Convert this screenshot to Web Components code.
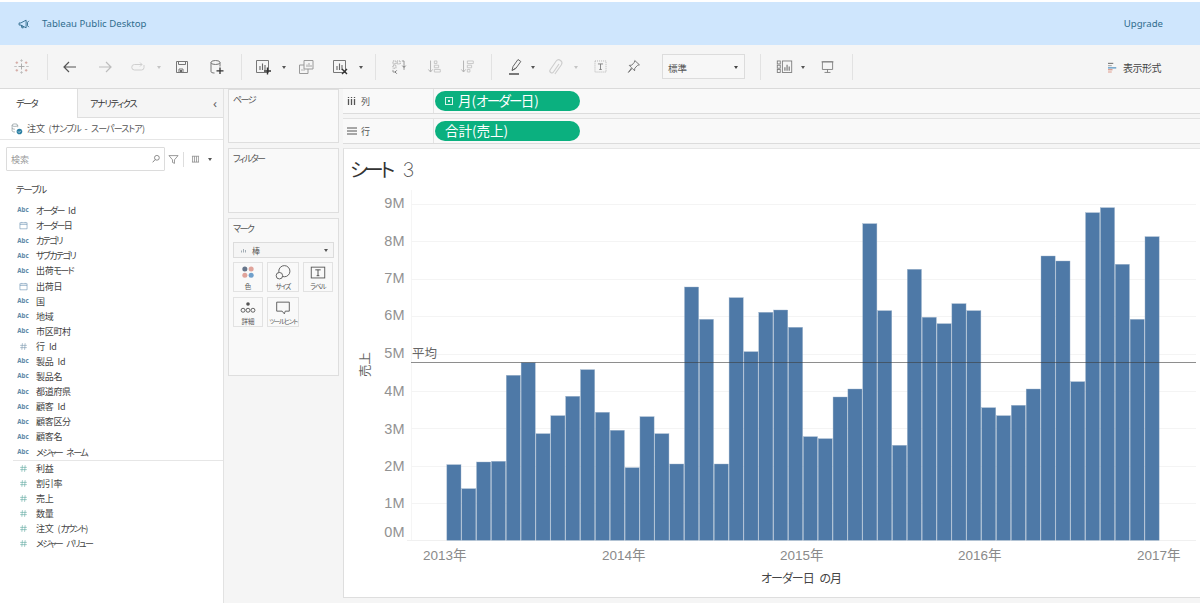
<!DOCTYPE html>
<html lang="ja">
<head>
<meta charset="utf-8">
<title>Tableau Public Desktop</title>
<style>
html,body{margin:0;height:100%;background:#f5f5f5;overflow:hidden}
body{font-family:"Noto Sans CJK JP","Noto Sans",sans-serif;font-feature-settings:"palt";color:#444}
</style>
</head>
<body>
<tb-app>
  <tb-banner slot="banner"></tb-banner>
  <tb-toolbar slot="toolbar"></tb-toolbar>
  <tb-datapane slot="data"></tb-datapane>
  <tb-cards slot="cards"></tb-cards>
  <tb-view slot="view"></tb-view>
</tb-app>
<script>
const K=(t,ls=-1.6)=>t.replace(/[\u30A0-\u30FF]+/g,m=>`<span style="letter-spacing:${ls}px">${m}</span>`);
const ICONS={
logo:`<g fill="none" stroke-width="1.100"><path d="M10 6.500v7M6.500 10h7" stroke="#a8a8a8"/><path d="M4.500 4v3M3 5.500h3M15.500 4v3M14 5.500h3M4.500 13v3M3 14.500h3M15.500 13v3M14 14.500h3" stroke="#d2a6a0"/><path d="M10 1.500v3M8.500 3h3M10 15.500v3M8.500 17h3M1.500 10h3M15.500 10h3" stroke="#bdbdbd"/></g>`,
back:`<path d="M16 10H4M9 5l-5 5 5 5" fill="none" stroke="#555" stroke-width="1.200"/>`,
fwd:`<path d="M4 10h12M11 5l5 5-5 5" fill="none" stroke="#bdbdbd" stroke-width="1.200"/>`,
redo:`<path d="M14 7.500H6.500a2.500 2.500 0 0 0 0 5.500h7a2.500 2.500 0 0 0 2.500-2.500V8M12 5.500l2 2-2 2" fill="none" stroke="#cfcfcf" stroke-width="1"/>`,
save:`<path d="M4.500 4.500h11v11h-11zM6.500 4.500v3h7v-3M7 15.500v-3.500h4v3.500" fill="none" stroke="#777"/><rect x="8" y="13" width="2" height="2" fill="#666"/>`,
data:`<g fill="none" stroke="#777"><ellipse cx="9.500" cy="5.500" rx="4.500" ry="2"/><path d="M5 5.500v9c0 1 1.500 1.500 3.500 1.500M14 5.500v4"/></g><path d="M14 10.500v6.500M10.500 13.800h7" stroke="#333" stroke-width="1.300"/>`,
sheet:`<path d="M3.500 3.500h12v12h-12z" fill="none" stroke="#777"/><path d="M7 13V9M9.500 13V6.500M12 13v-5" stroke="#666" stroke-width="1.100"/><path d="M14.500 10.500v7M11 14h7" stroke="#333" stroke-width="1.400"/>`,
dup:`<path d="M8 3.500h9v8.500h-9zM3.500 8H8M3.500 8v8.500H12V12" fill="none" stroke="#9a9a9a"/><path d="M11 10V7.500M13 10V6M15 10V8" stroke="#a5a5a5"/><path d="M6 14v-2M8 14v-2" stroke="#b5b5b5"/>`,
clear:`<path d="M3.500 3.500h12v12h-12z" fill="none" stroke="#777"/><path d="M7 13V9M9.500 13V6.500M12 13v-5" stroke="#666" stroke-width="1.100"/><path d="M12 12l5 5M17 12l-5 5" stroke="#333" stroke-width="1.400"/>`,
swap:`<g fill="none" stroke="#8a8a8a"><rect x="3.500" y="3.500" width="3.500" height="3.500" stroke-dasharray="1 1"/><rect x="3.500" y="8.500" width="3.500" height="3.500" stroke-dasharray="1 1"/><rect x="8.500" y="3.500" width="3.500" height="3.500" stroke-dasharray="1 1"/><path d="M3.500 14v2.500H7M14 3.500h2.500V14"/><path d="M8 14.500l-2 2 2 2" stroke="#666"/><path d="M14.500 9l2 2 2-2" stroke="#666"/></g>`,
sortasc:`<g fill="none" stroke="#c2c2c2"><path d="M11 3.500h3v3h-3zM11 8.500h5v3h-5zM11 13.500h7v3h-7z"/></g><path d="M6.500 3v13M4 13.500l2.500 3 2.500-3" fill="none" stroke="#aaa"/>`,
sortdesc:`<g fill="none" stroke="#c2c2c2"><path d="M11 3.500h7v3h-7zM11 8.500h5v3h-5zM11 13.500h3v3h-3z"/></g><path d="M6.500 3v13M4 13.500l2.500 3 2.500-3" fill="none" stroke="#aaa"/>`,
pen:`<path d="M7 13.500l1-4 5-7 2.800 2-5 7z" fill="none" stroke="#666"/><path d="M7 13.500l3.800-2.500" stroke="#666"/><path d="M4 17h10" stroke="#333" stroke-width="1.300"/>`,
clip:`<path d="M14.500 6l-5.500 8a2 2 0 0 1-3.300-2.300l6-8.700a3.200 3.200 0 0 1 5.200 3.700l-6.500 9.300" transform="translate(-1.500 1)" fill="none" stroke="#cdcdcd" stroke-width="1.100"/>`,
tbox:`<path d="M3.500 3.500h13v13h-13z" fill="none" stroke="#aaa" stroke-dasharray="1.200 1.200"/><path d="M7 7h6M10 7v6.500M8.500 13.500h3" fill="none" stroke="#777"/>`,
pin:`<path d="M11.500 3l5.500 5-2 .5-3.500 3.500-.2 3-2.800-2.800-4.500 4.800 3.800-5.500-2.800-2.800 3-.3L11 5z" fill="none" stroke="#666"/>`,
showme:`<g fill="none" stroke="#777"><rect x="1.500" y="3.500" width="3.500" height="3.500"/><rect x="1.500" y="8.500" width="3.500" height="3.500"/><rect x="1.500" y="13.500" width="3.500" height="3.500"/><rect x="7.500" y="3.500" width="11" height="13.500"/></g><path d="M10.500 15v-4M13 15V8M15.500 15v-5" stroke="#666" stroke-width="1.200"/>`,
present:`<path d="M4 4.500h12v9H4zM10 13.500v3.500M6.500 17h7" fill="none" stroke="#777"/><path d="M3 4.500h14" stroke="#777"/>`,
format:`<path d="M4 4.500h7" stroke="#777" stroke-width="1.500"/><path d="M4 7.500h5" stroke="#aaa" stroke-width="1.500"/><path d="M4 10.500h11" stroke="#4e8fc0" stroke-width="1.600"/><path d="M4 13h6" stroke="#d98a78" stroke-width="1.500"/><path d="M4 16h5" stroke="#e2a79a" stroke-width="1.500"/>`,
source:`<g fill="none" stroke="#8a969b"><ellipse cx="7" cy="4.500" rx="4" ry="1.800"/><path d="M3 4.500v8c0 1 1.800 1.800 4 1.800M11 4.500v3M3 8.500c0 1 1.800 1.800 4 1.800"/></g><circle cx="13.500" cy="13.500" r="4" fill="#2b7fa3"/><path d="M11.500 13.500l1.500 1.500 2.500-2.500" stroke="#fff" fill="none"/>`,
mega:`<path d="M3 8.500v3h2.500l7.500 4V4.500L5.500 8.500zM6 11.500l1 4h2l-1-3M15 7.500v5M15 7.500l2-2M15 12.500l2 2" fill="none" stroke="#2e6a8c" stroke-width="1.300"/>`,
search:`<circle cx="11.500" cy="8" r="4" fill="none" stroke="#666" stroke-width="1.200"/><path d="M8.500 11l-4 4.500" stroke="#666" stroke-width="1.300"/>`,
filter:`<path d="M3 4h14l-5.500 6.500V16l-3-1.500v-4z" fill="none" stroke="#666"/>`,
grid:`<path d="M5.500 5v9M8.500 5v9M11.500 5v9M14.500 5v9M4.500 5h11M4.500 14h11" fill="none" stroke="#8a8a8a" stroke-width="1.200"/>`,
date:`<path d="M3.500 5h13v11h-13zM3.500 8h13M7 3.500V5M13 3.500V5" fill="none" stroke="#5b86a8"/>`,
hashb:`<path d="M8 4l-1 12M13 4l-1 12M4 8h12M4 12h12" fill="none" stroke="#7a97ad" stroke-width="1.100"/>`,
hashg:`<path d="M8 4l-1 12M13 4l-1 12M4 8h12M4 12h12" fill="none" stroke="#5fa8a0" stroke-width="1.100"/>`,
bars:`<path d="M5 15v-4M9 15V8M13 15v-5" stroke="#9aa5ae" stroke-width="1.800"/>`,
mcolor:`<circle cx="6.500" cy="5.500" r="2.800" fill="#66758a"/><circle cx="13.500" cy="5.500" r="2.800" fill="#e0a39a"/><circle cx="6.500" cy="12.500" r="2.800" fill="#e0a39a"/><circle cx="13.500" cy="12.500" r="2.800" fill="#6f9fcb"/>`,
msize:`<circle cx="11.500" cy="8" r="6.200" fill="none" stroke="#555"/><circle cx="6" cy="13" r="3.600" fill="#f9f9f9" stroke="#555"/>`,
mlabel:`<rect x="2.500" y="3.500" width="15" height="12" fill="none" stroke="#555"/><path d="M7 6.500h6M10 6.500v6.500M8.500 13h3" fill="none" stroke="#444"/>`,
mdetail:`<circle cx="10" cy="5.500" r="2" fill="#555"/><g fill="none" stroke="#555"><circle cx="4.500" cy="12.500" r="2.200"/><circle cx="10" cy="12.500" r="2.200"/><circle cx="15.500" cy="12.500" r="2.200"/></g>`,
mtip:`<path d="M3 3.500h14v10h-4.500l-1 3-2.500-3H3z" fill="none" stroke="#555"/>`
};
function def(name,css,html,init){
  customElements.define(name,class extends HTMLElement{
    constructor(){super();
      const r=this.attachShadow({mode:"open"});
      r.innerHTML=`<style>${css}</style>`+html;
      if(init)init(r,this);
    }
  });
}
def("tb-icon",`:host{display:inline-flex;flex:none;width:var(--s,20px);height:var(--s,20px)}svg{width:100%;height:100%;display:block}`,"",(r,h)=>{
  const tpl=document.createElement("div");
  tpl.innerHTML=`<svg xmlns="http://www.w3.org/2000/svg" viewBox="0 0 20 20">${ICONS[h.getAttribute("name")]||""}</svg>`;
  r.appendChild(tpl.firstChild);
});
def("tb-app",`:host{display:block;width:1200px;height:603px;background:#f5f5f5}
.top{height:2px;background:#fff}
.main{display:flex;height:514px}
.cards{margin-left:4px;width:112px;flex:none}
.view{margin-left:3px;flex:1;min-width:0}`,
`<div class="top"></div><slot name="banner"></slot><slot name="toolbar"></slot>
<div class="main"><slot name="data"></slot><div class="cards"><slot name="cards"></slot></div><div class="view"><slot name="view"></slot></div></div>`);

def("tb-banner",`:host{display:flex;align-items:center;height:43px;background:#cfe6fd;color:#2f6d8e;font:9.600px/1 "Noto Sans",sans-serif;padding:0 37px 0 17px;box-sizing:border-box}
tb-icon{--s:14px;margin-right:11px}
.sp{flex:1}`,
`<tb-icon name="mega"></tb-icon><span>Tableau Public Desktop</span><span class="sp"></span><span>Upgrade</span>`);

def("tb-sep",`:host{display:block;width:1px;height:26px;background:#e2e2e2;flex:none}`,"");
def("tb-caret",`:host{display:block;width:6px;height:6px;flex:none;position:relative}
i{position:absolute;left:1px;top:2px;border:2px solid transparent;border-top:3px solid var(--c,#555);border-bottom:0}`,`<i></i>`);
def("tb-combo",`:host{display:flex;align-items:center;justify-content:space-between;width:83px;height:25px;box-sizing:border-box;background:#f7f7f7;border:1px solid #dcdcdc;padding:2px 5px 0;font-size:9.500px;color:#555;flex:none}
tb-caret{--c:#444;margin-top:-2px}`,`<span>標準</span><tb-caret></tb-caret>`);

def("tb-toolbar",`:host{display:flex;align-items:center;height:44px;background:#f5f5f5;border-bottom:1px solid #dadada;box-sizing:border-box}
tb-icon{--s:20px}
tb-icon.s{--s:17px}
.fmt{margin-left:auto;margin-right:39px;display:flex;align-items:center;font-size:10px;letter-spacing:-.5px;color:#444;gap:3px;padding-top:1px}
.fmt tb-icon{--s:15px}
.l{--c:#c4c4c4}`,
`<tb-icon class="s" name="logo" style="margin-left:13px"></tb-icon>
<tb-sep style="margin-left:17px"></tb-sep>
<tb-icon name="back" style="margin-left:12px"></tb-icon>
<tb-icon name="fwd" style="margin-left:15px"></tb-icon>
<tb-icon name="redo" style="margin-left:13px"></tb-icon>
<tb-caret class="l" style="margin-left:8px"></tb-caret>
<tb-icon name="save" style="margin-left:10px"></tb-icon>
<tb-icon name="data" style="margin-left:14px"></tb-icon>
<tb-sep style="margin-left:15px"></tb-sep>
<tb-icon name="sheet" style="margin-left:11px"></tb-icon>
<tb-caret style="margin-left:8px"></tb-caret>
<tb-icon name="dup" style="margin-left:9px"></tb-icon>
<tb-icon name="clear" style="margin-left:14px"></tb-icon>
<tb-caret style="margin-left:8px"></tb-caret>
<tb-sep style="margin-left:11px"></tb-sep>
<tb-icon class="s" name="swap" style="margin-left:14px"></tb-icon>
<tb-icon class="s" name="sortasc" style="margin-left:18px"></tb-icon>
<tb-icon class="s" name="sortdesc" style="margin-left:16px"></tb-icon>
<tb-sep style="margin-left:16px"></tb-sep>
<tb-icon name="pen" style="margin-left:13px"></tb-icon>
<tb-caret style="margin-left:5px"></tb-caret>
<tb-icon name="clip" style="margin-left:10px"></tb-icon>
<tb-caret class="l" style="margin-left:7px"></tb-caret>
<tb-icon class="s" name="tbox" style="margin-left:13px"></tb-icon>
<tb-icon class="s" name="pin" style="margin-left:16px"></tb-icon>
<tb-combo style="margin-left:20px"></tb-combo>
<tb-sep style="margin-left:15px"></tb-sep>
<tb-icon class="s" name="showme" style="margin-left:15px"></tb-icon>
<tb-caret style="margin-left:7px"></tb-caret>
<tb-icon class="s" name="present" style="margin-left:13px"></tb-icon>
<tb-sep style="margin-left:16px"></tb-sep>
<div class="fmt"><tb-icon name="format"></tb-icon><span>表示形式</span></div>`);

def("tb-field",`:host{display:flex;align-items:center;height:15.100px;font-size:9px;letter-spacing:-.3px;word-spacing:2.500px;color:#444;white-space:nowrap}
.i{width:36px;flex:none;display:flex;justify-content:center;box-sizing:border-box;padding-left:10px;letter-spacing:0}`,
`<span class="i"><slot name="i"></slot></span><span><slot></slot></span>`);

const DIMS=[["a","オーダー Id"],["d","オーダー日"],["a","カテゴリ"],["a","サブカテゴリ"],["a","出荷モード"],["d","出荷日"],["a","国"],["a","地域"],["a","市区町村"],["h","行 Id"],["a","製品 Id"],["a","製品名"],["a","都道府県"],["a","顧客 Id"],["a","顧客区分"],["a","顧客名"],["a","メジャー ネーム"]];
const MEAS=["利益","割引率","売上","数量","注文 (カウント)","メジャー バリュー"];
function fieldIcon(t){
  if(t==="a")return `<span slot="i" style="font:bold 6.200px/1 'Noto Sans',sans-serif;color:#5f8aa8">Abc</span>`;
  if(t==="d")return `<tb-icon slot="i" name="date" style="--s:11px"></tb-icon>`;
  if(t==="h")return `<tb-icon slot="i" name="hashb" style="--s:11px"></tb-icon>`;
  return `<tb-icon slot="i" name="hashg" style="--s:11px"></tb-icon>`;
}
def("tb-datapane",`:host{display:block;width:224px;height:514px;flex:none;background:#fff;border-right:1px solid #e2e2e2;box-sizing:border-box;font-size:9px}
.tabs{display:flex;height:29px;font-size:9px;color:#333}
.tab{display:flex;align-items:center}
.t1{width:77px;padding-left:16px;box-sizing:border-box}
.t2{flex:1;background:#f5f5f5;border-left:1px solid #dedede;border-bottom:1px solid #dedede;padding-left:12px;justify-content:space-between;padding-right:6px}
.chev{color:#666;font:13px/1 "Noto Sans",sans-serif}
.src{display:flex;align-items:center;height:22px;box-sizing:border-box;border-bottom:1px solid #e6e6e6;padding-left:10px;gap:3px;color:#555;word-spacing:1.500px}
.src tb-icon{--s:14px}
.find{display:flex;align-items:center;margin:7px 0 0 6px;height:24px}
.box{width:159px;height:24px;box-sizing:border-box;border:1px solid #dcdcdc;border-radius:1px;display:flex;align-items:center;justify-content:space-between;padding:0 2px 0 4px;color:#9a9a9a}
.box tb-icon{--s:12px}
.find>tb-icon{--s:13px;margin-left:2px}
.v{width:1px;height:15px;background:#ddd;margin:0 3px 0 3px}
.grid{--s:13px}
tb-caret{margin-left:5px}
.h{padding-left:16px;margin-top:6px;height:24px;display:flex;align-items:center;color:#444;font-size:9.500px}
.list{display:flex;flex-direction:column;margin-top:2px}
.rule{height:1px;background:#e6e6e6;margin:0 0 0 13px}
.ml{margin-top:0}`,
`<div class="tabs"><div class="tab t1">${K("データ",-1.3)}</div><div class="tab t2"><span>${K("アナリティクス",-1.2)}</span><span class="chev">‹</span></div></div>
<div class="src"><tb-icon name="source"></tb-icon><span>注文 (${K("サンプル",-.9)} - ${K("スーパーストア",-.9)})</span></div>
<div class="find"><div class="box"><span>検索</span><tb-icon name="search"></tb-icon></div><tb-icon name="filter"></tb-icon><span class="v"></span><tb-icon class="grid" name="grid"></tb-icon><tb-caret></tb-caret></div>
<div class="h">${K("テーブル",-1.2)}</div>
<div class="list">${DIMS.map(d=>`<tb-field>${fieldIcon(d[0])}${K(d[1])}</tb-field>`).join("")}</div>
<div class="rule"></div>
<div class="list ml">${MEAS.map(m=>`<tb-field>${fieldIcon("g")}${K(m)}</tb-field>`).join("")}</div>`);

def("tb-card",`:host{display:block;box-sizing:border-box;background:#f9f9f9;border:1px solid #dedede;font-size:9px;color:#555;padding:3px 4px 5px}`,`<slot></slot>`);
def("tb-markbtn",`:host{display:flex;flex-direction:column;align-items:center;box-sizing:border-box;height:30px;border:1px solid #e2e2e2;font-size:6.500px;color:#555;white-space:nowrap;line-height:1}
::slotted(tb-icon){--s:18px;margin-top:1px}
span{margin-top:1px}`,`<slot name="i"></slot><span><slot></slot></span>`);
def("tb-cards",`:host{display:flex;flex-direction:column;gap:5px;width:111px}
.p{height:54px}.f{height:65px}.m{height:158px}
.sel{display:flex;align-items:center;height:16px;box-sizing:border-box;border:1px solid #dcdcdc;margin:7px 0 4px 0;padding:0 4px 0 5px;background:#f5f5f5}
.sel tb-icon{--s:10px;margin-right:3px}
.sel span{flex:1;font-size:8px}
.g{display:grid;grid-template-columns:30px 32px 30px;column-gap:4px;row-gap:5px}`,
`<tb-card class="p">${K("ページ")}</tb-card><tb-card class="f">${K("フィルター")}</tb-card>
<tb-card class="m"><div>${K("マーク")}</div>
<div class="sel"><tb-icon name="bars"></tb-icon><span>棒</span><tb-caret></tb-caret></div>
<div class="g">
<tb-markbtn><tb-icon slot="i" name="mcolor"></tb-icon>色</tb-markbtn>
<tb-markbtn><tb-icon slot="i" name="msize"></tb-icon>${K("サイズ",-1)}</tb-markbtn>
<tb-markbtn><tb-icon slot="i" name="mlabel"></tb-icon>${K("ラベル",-1)}</tb-markbtn>
<tb-markbtn><tb-icon slot="i" name="mdetail"></tb-icon>詳細</tb-markbtn>
<tb-markbtn><tb-icon slot="i" name="mtip"></tb-icon>${K("ツールヒント",-1.2)}</tb-markbtn>
</div></tb-card>`);

def("tb-pill",`:host{display:flex;align-items:center;width:145px;height:20px;border-radius:10px;background:#0bb07f;color:#fff;font-size:13.500px;box-sizing:border-box;padding-left:10px;white-space:nowrap;line-height:1}`,
`<slot name="pre"></slot><slot></slot>`);
def("tb-sq",`:host{display:block;width:8px;height:8px;box-sizing:border-box;border:1px solid #d7f3ea;margin-right:5px;flex:none;position:relative}
i{position:absolute;left:2px;top:2px;width:2px;height:2px;background:#d7f3ea}`,`<i></i>`);
def("tb-shelf",`:host{display:flex;align-items:center;box-sizing:border-box;background:#f9f9f9;border-bottom:1px solid #dcdcdc;font-size:9px;color:#555}
.l{display:flex;align-items:center;width:91px;height:100%;flex:none;box-sizing:border-box;border-right:1px solid #e3e3e3;padding-left:4px;gap:4px}
.ic{width:10px;height:10px;display:flex}
.p{padding-left:1px}`,
`<div class="l"><span class="ic"><slot name="ic"></slot></span><slot name="t"></slot></div><div class="p"><slot></slot></div>`);

const TOPS=[464.7,488.7,462,461.3,375.3,362.7,433.7,415.7,396.3,369.7,412.3,430.3,467.7,416.7,433.7,464,287,319.3,464,297.7,351.7,312.3,310,327.3,436.7,438.7,397,389,223.7,310.7,445.3,269.3,317.3,323.7,303.7,310.7,407.7,415.7,405.3,389,256,261,381.7,212.7,207.7,264.3,319.3,236.7];
function chartSvg(){
  let s=`<svg xmlns="http://www.w3.org/2000/svg" width="856" height="411" viewBox="344 186 856 411" style="display:block;font-family:'Liberation Sans','Noto Sans CJK JP',sans-serif">`;
  s+=`<path d="M411.500 190V541" stroke="#f5f5f5"/>`;
  for(let k=1;k<=9;k++){const y=Math.round(540.6-37.4*k)+.5;s+=`<path d="M411 ${y}H1196" stroke="#f4f4f4"/>`;}
  s+=`<path d="M407 540.500H1196" stroke="#f0f0f0"/>`;
  TOPS.forEach((t,i)=>{const x=446.5+i*14.854;s+=`<rect x="${(x+.35).toFixed(2)}" y="${t}" width="14.150" height="${(540.3-t).toFixed(1)}" fill="#4e79a7" stroke="#9fb4cb" stroke-width=".4"/>`;});
  s+=`<path d="M411 362.500H1196" stroke="#3c3c3c" stroke-opacity=".58"/>`;
  const ys=[531.7,503,466,428.5,391,353,315,278,240.5,203];
  ys.forEach((y,k)=>{s+=`<text x="404.500" y="${y+5.2}" text-anchor="end" font-size="14.500" fill="#929292">${k}M</text>`;});
  [[423,"2013年"],[602,"2014年"],[780,"2015年"],[958,"2016年"],[1137,"2017年"]].forEach(a=>{s+=`<text x="${a[0]}" y="560" font-size="13.500" fill="#8a8a8a">${a[1]}</text>`;});
  s+=`<text x="412" y="358" font-size="12.500" fill="#666">平均</text>`;
  s+=`<text x="801" y="583" text-anchor="middle" font-size="12" fill="#444" letter-spacing="-1" word-spacing="4" style="font-family:'Noto Sans CJK JP',sans-serif;font-feature-settings:'palt'">オーダー日 の月</text>`;
  s+=`<text transform="translate(370 377) rotate(-90)" font-size="12.500" fill="#666" style="font-family:'Noto Sans CJK JP',sans-serif">売上</text>`;
  return s+`</svg>`;
}
def("tb-chart",`:host{display:block;height:411px}`,chartSvg());
def("tb-sheet",`:host{display:block;height:450px;box-sizing:border-box;background:#fff;border-left:1px solid #dedede;border-top:1px solid #e6e6e6;border-bottom:1px solid #dedede}
h1{margin:0;height:37px;box-sizing:border-box;padding:7px 0 0 6px;font-weight:400;font-size:19.500px;line-height:26px;color:#333;display:flex;align-items:baseline}
.t{letter-spacing:-3.600px}
.n{color:#555;font:200 20px/26px Inter,sans-serif;margin-left:11px}`,
`<h1><span class="t">シート</span><span class="n">3</span></h1><tb-chart></tb-chart>`);
def("tb-view",`:host{display:flex;flex-direction:column}
tb-shelf{height:25px}
tb-shelf.b{margin-top:4px;height:26px;border-top:1px solid #e2e2e2}
tb-sheet{margin-top:4px}
svg{width:10px;height:10px;display:block}`,
`<tb-shelf><svg slot="ic" viewBox="0 0 10 10"><path d="M1.500 3v6M4.500 3v6M7.500 3v6M1.500 1v1M4.500 1v1M7.500 1v1" stroke="#555" stroke-width="1.300"/></svg><span slot="t">列</span><tb-pill><tb-sq slot="pre"></tb-sq>月(${K("オーダー",-1.7)}日)</tb-pill></tb-shelf>
<tb-shelf class="b"><svg slot="ic" viewBox="0 0 10 10"><path d="M0 2h10M0 5h10M0 8h10" stroke="#555"/></svg><span slot="t">行</span><tb-pill>合計(売上)</tb-pill></tb-shelf>
<tb-sheet></tb-sheet>`);
</script>
</body>
</html>
